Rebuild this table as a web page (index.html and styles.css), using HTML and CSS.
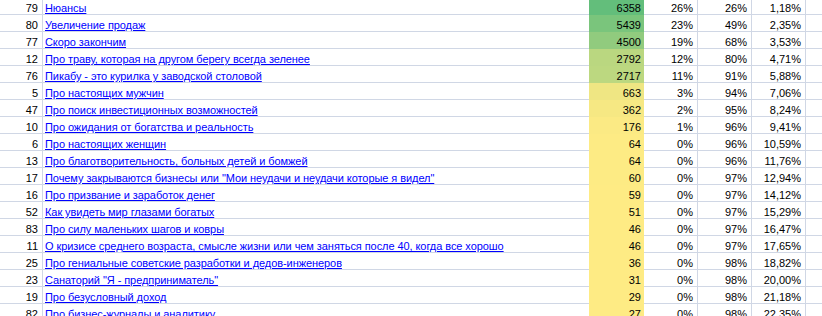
FILE: index.html
```html
<!DOCTYPE html>
<html lang="ru">
<head>
<meta charset="utf-8">
<title>Таблица</title>
<link rel="stylesheet" href="styles.css">
</head>
<body>
<div class="sheet">
  <div class="row"><div class="c num">79</div><div class="c title"><a href="#">Нюансы</a></div><div class="c val" style="background:#63be7b">6358</div><div class="c pct">26%</div><div class="c pct">26%</div><div class="c pct">1,18%</div><div class="c rest"></div></div>
  <div class="row"><div class="c num">80</div><div class="c title"><a href="#">Увеличение продаж</a></div><div class="c val" style="background:#7ac57c">5439</div><div class="c pct">23%</div><div class="c pct">49%</div><div class="c pct">2,35%</div><div class="c rest"></div></div>
  <div class="row"><div class="c num">77</div><div class="c title"><a href="#">Скоро закончим</a></div><div class="c val" style="background:#91cb7e">4500</div><div class="c pct">19%</div><div class="c pct">68%</div><div class="c pct">3,53%</div><div class="c rest"></div></div>
  <div class="row"><div class="c num">12</div><div class="c title"><a href="#">Про траву, которая на другом берегу всегда зеленее</a></div><div class="c val" style="background:#bad780">2792</div><div class="c pct">12%</div><div class="c pct">80%</div><div class="c pct">4,71%</div><div class="c rest"></div></div>
  <div class="row"><div class="c num">76</div><div class="c title"><a href="#">Пикабу - это курилка у заводской столовой</a></div><div class="c val" style="background:#bcd880">2717</div><div class="c pct">11%</div><div class="c pct">91%</div><div class="c pct">5,88%</div><div class="c rest"></div></div>
  <div class="row"><div class="c num">5</div><div class="c title"><a href="#">Про настоящих мужчин</a></div><div class="c val" style="background:#efe683">663</div><div class="c pct">3%</div><div class="c pct">94%</div><div class="c pct">7,06%</div><div class="c rest"></div></div>
  <div class="row"><div class="c num">47</div><div class="c title"><a href="#">Про поиск инвестиционных возможностей</a></div><div class="c val" style="background:#f6e883">362</div><div class="c pct">2%</div><div class="c pct">95%</div><div class="c pct">8,24%</div><div class="c rest"></div></div>
  <div class="row"><div class="c num">10</div><div class="c title"><a href="#">Про ожидания от богатства и реальность</a></div><div class="c val" style="background:#fbea84">176</div><div class="c pct">1%</div><div class="c pct">96%</div><div class="c pct">9,41%</div><div class="c rest"></div></div>
  <div class="row"><div class="c num">6</div><div class="c title"><a href="#">Про настоящих женщин</a></div><div class="c val" style="background:#fdeb84">64</div><div class="c pct">0%</div><div class="c pct">96%</div><div class="c pct">10,59%</div><div class="c rest"></div></div>
  <div class="row"><div class="c num">13</div><div class="c title"><a href="#">Про благотворительность, больных детей и бомжей</a></div><div class="c val" style="background:#fdeb84">64</div><div class="c pct">0%</div><div class="c pct">96%</div><div class="c pct">11,76%</div><div class="c rest"></div></div>
  <div class="row"><div class="c num">17</div><div class="c title"><a href="#">Почему закрываются бизнесы или "Мои неудачи и неудачи которые я видел"</a></div><div class="c val" style="background:#fdeb84">60</div><div class="c pct">0%</div><div class="c pct">97%</div><div class="c pct">12,94%</div><div class="c rest"></div></div>
  <div class="row"><div class="c num">16</div><div class="c title"><a href="#">Про призвание и заработок денег</a></div><div class="c val" style="background:#feeb84">59</div><div class="c pct">0%</div><div class="c pct">97%</div><div class="c pct">14,12%</div><div class="c rest"></div></div>
  <div class="row"><div class="c num">52</div><div class="c title"><a href="#">Как увидеть мир глазами богатых</a></div><div class="c val" style="background:#feeb84">51</div><div class="c pct">0%</div><div class="c pct">97%</div><div class="c pct">15,29%</div><div class="c rest"></div></div>
  <div class="row"><div class="c num">83</div><div class="c title"><a href="#">Про силу маленьких шагов и ковры</a></div><div class="c val" style="background:#feeb84">46</div><div class="c pct">0%</div><div class="c pct">97%</div><div class="c pct">16,47%</div><div class="c rest"></div></div>
  <div class="row"><div class="c num">11</div><div class="c title"><a href="#">О кризисе среднего возраста, смысле жизни или чем заняться после 40, когда все хорошо</a></div><div class="c val" style="background:#feeb84">46</div><div class="c pct">0%</div><div class="c pct">97%</div><div class="c pct">17,65%</div><div class="c rest"></div></div>
  <div class="row"><div class="c num">25</div><div class="c title"><a href="#">Про гениальные советские разработки и дедов-инженеров</a></div><div class="c val" style="background:#feeb84">36</div><div class="c pct">0%</div><div class="c pct">98%</div><div class="c pct">18,82%</div><div class="c rest"></div></div>
  <div class="row"><div class="c num">23</div><div class="c title"><a href="#">Санаторий "Я - предприниматель"</a></div><div class="c val" style="background:#feeb84">31</div><div class="c pct">0%</div><div class="c pct">98%</div><div class="c pct">20,00%</div><div class="c rest"></div></div>
  <div class="row"><div class="c num">19</div><div class="c title"><a href="#">Про безусловный доход</a></div><div class="c val" style="background:#feeb84">29</div><div class="c pct">0%</div><div class="c pct">98%</div><div class="c pct">21,18%</div><div class="c rest"></div></div>
  <div class="row"><div class="c num">82</div><div class="c title"><a href="#">Про бизнес-журналы и аналитику</a></div><div class="c val" style="background:#feeb84">27</div><div class="c pct">0%</div><div class="c pct">98%</div><div class="c pct">22,35%</div><div class="c rest"></div></div>
</div>
</body>
</html>
```
FILE: styles.css
```css
html, body {
  margin: 0;
  padding: 0;
  background: #ffffff;
}
body {
  font-family: "Liberation Sans", Arial, sans-serif;
  font-size: 11px;
  color: #000000;
  overflow: hidden;
}
.sheet {
  margin-top: -2px;
  display: flex;
  flex-direction: column;
}
.row {
  display: flex;
  height: 17px;
}
.c {
  box-sizing: border-box;
  height: 17px;
  padding-top: 4px;
  line-height: 12px;
  border-bottom: 1px solid #d0d7e5;
  white-space: nowrap;
  overflow: visible;
}
.num {
  width: 43px;
  flex: none;
  text-align: right;
  padding-right: 4px;
  border-right: 1px solid #d0d7e5;
}
.title {
  width: 546px;
  flex: none;
  padding-left: 2px;
  letter-spacing: -0.07px;
}
.title a {
  color: #0000ff;
  text-decoration: underline;
}
.val {
  width: 55px;
  flex: none;
  text-align: right;
  padding-right: 3px;
  border-bottom-color: transparent;
}
.pct {
  width: 54px;
  flex: none;
  text-align: right;
  padding-right: 4px;
  border-right: 1px solid #d0d7e5;
}
.rest {
  flex: 1;
}
```
